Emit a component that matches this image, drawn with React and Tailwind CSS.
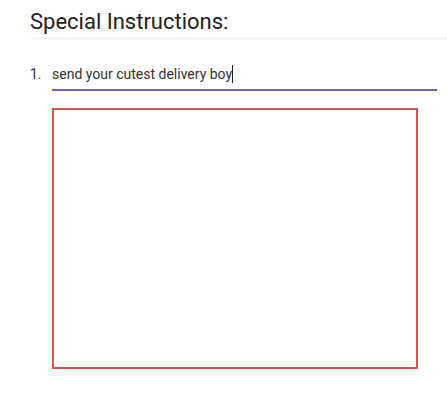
import React from 'react';

export default function App() {
  return (
    <div className="w-[447px] h-[400px] bg-white pl-[30px] pt-[8px] font-['Roboto',sans-serif] text-[#222]">
      <div className="border-b border-[#f0f0f0] pb-[2px]">
        <h2 className="text-[22px] leading-[28px] font-normal">Special Instructions:</h2>
      </div>

      <div className="flex mt-[23px] pr-[10px]">
        <span className="w-[22px] text-[14px] leading-[24px] text-[#333]">1.</span>
        <div className="flex-1">
          <div className="flex items-center h-[24px] text-[14px] leading-[24px] text-[#333]">
            <span>send your cutest delivery boy</span>
            <span className="w-px h-[18px] bg-[#222]" />
          </div>
          <div className="mt-[3px] h-[2px] bg-[#7e57c2]" />
        </div>
      </div>

      <div className="ml-[22px] mt-[17px] w-[366px] h-[261px] border-2 border-[#d9534f]" />
    </div>
  );
}
